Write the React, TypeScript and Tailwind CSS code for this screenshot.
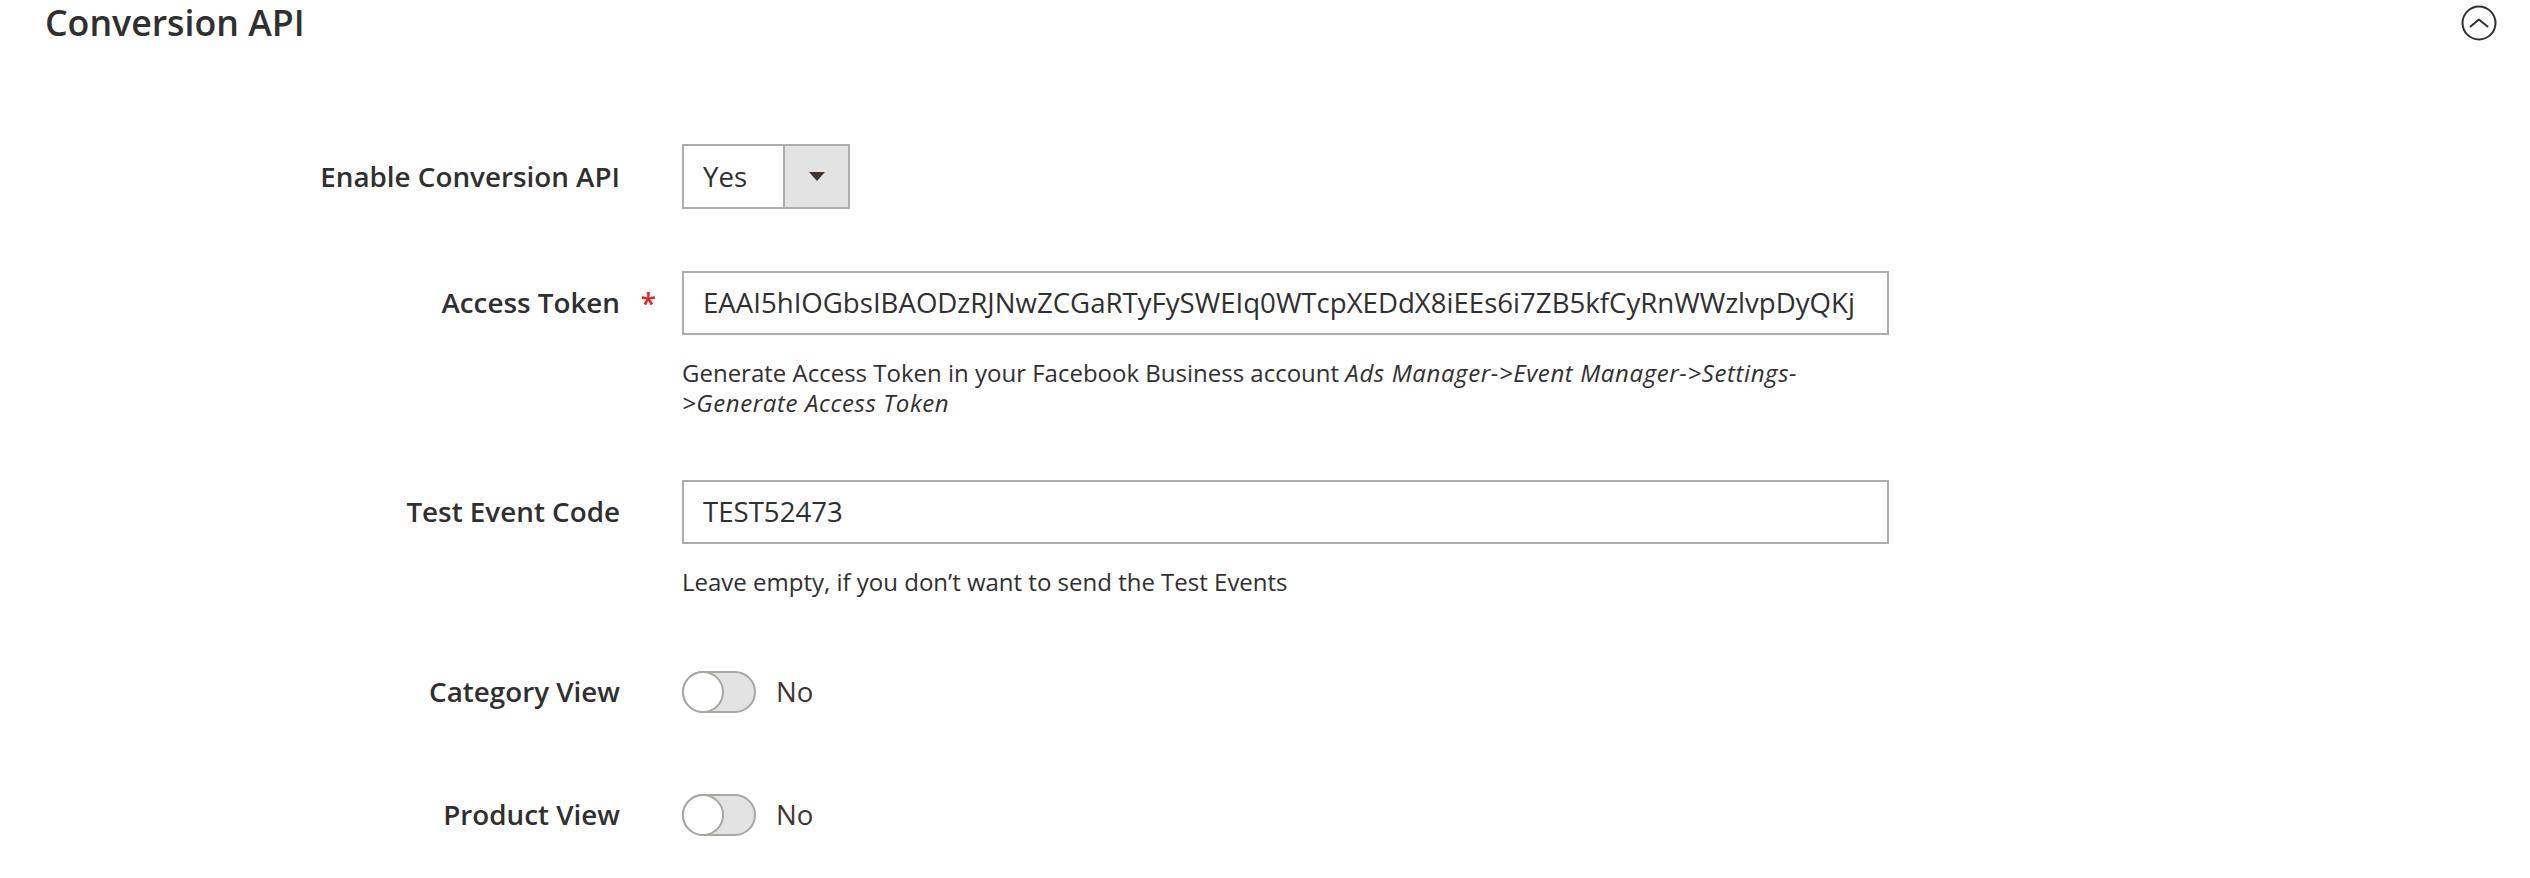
import React from 'react';

const Toggle = () => (
   <div className="flex items-center">
      <div className="relative w-[74px] h-[42px] rounded-full bg-[#e3e3e3] border-2 border-[#aaa6a0]">
         <div className="absolute -left-[2px] -top-[2px] w-[42px] h-[42px] rounded-full bg-white border-2 border-[#aaa6a0]" />
      </div>
      <span className="ml-[20px] text-[27.6px] text-[#41362f]">No</span>
   </div>
);

const Label = ({ text, required }: { text: string; required?: boolean }) => (
   <div className="flex items-center shrink-0">
      <div className="w-[620px] text-right text-[27.8px] font-semibold text-[#303030]">{text}</div>
      <div className="w-[62px] flex justify-center pr-[5px] text-[28px] font-semibold text-[#e22626] leading-none">
         {required ? '*' : ''}
      </div>
   </div>
);

const TextBox = ({ value }: { value: string }) => (
   <div className="w-[1207px] h-[64px] border-2 border-[#adadad] bg-white px-[19px] flex items-center">
      <div className="overflow-hidden whitespace-nowrap text-[27.6px] text-[#303030]">{value}</div>
   </div>
);

export default function App() {
   return (
      <div className="bg-white min-h-[878px] font-['Open_Sans',sans-serif] text-[#303030]">
         {/* Header */}
         <div className="flex items-center justify-between h-[45px] pl-[45px] pr-[33px]">
            <h1 className="text-[35.7px] font-semibold leading-[45px] text-[#303030]">Conversion API</h1>
            <svg width="36" height="36" viewBox="0 0 36 36" fill="none" stroke="#303030" strokeWidth="2">
               <circle cx="18" cy="18" r="16.5" />
               <polyline points="9.5,21.5 18,14.5 26.5,21.5" strokeLinecap="round" strokeLinejoin="round" />
            </svg>
         </div>

         <div className="mt-[99px]">
            {/* Enable Conversion API */}
            <div className="flex items-center h-[65px]">
               <Label text="Enable Conversion API" />
               <div className="flex h-[65px] w-[168px] border-2 border-[#adadad] bg-white">
                  <div className="flex-1 flex items-center pl-[19px] text-[27.6px] text-[#303030]">Yes</div>
                  <div className="w-[65px] flex items-center justify-center bg-[#e3e3e3] border-l-2 border-[#adadad]">
                     <svg width="16" height="10" viewBox="0 0 16 10">
                        <polygon points="0,0 16,0 8,9" fill="#41362f" />
                     </svg>
                  </div>
               </div>
            </div>

            {/* Access Token */}
            <div className="mt-[62px] flex items-center h-[64px]">
               <Label text="Access Token" required />
               <TextBox value="EAAI5hIOGbsIBAODzRJNwZCGaRTyFySWEIq0WTcpXEDdX8iEEs6i7ZB5kfCyRnWWzlvpDyQKj" />
            </div>
            <div className="ml-[682px] mt-[23px] w-[1207px] text-[24px] leading-[30px] text-[#303030]">
               Generate Access Token in your Facebook Business account{' '}
               <em className="tracking-[0.6px]">
                  Ads Manager-&gt;Event Manager-&gt;Settings-
                  <br />
                  &gt;Generate Access Token
               </em>
            </div>

            {/* Test Event Code */}
            <div className="mt-[62px] flex items-center h-[64px]">
               <Label text="Test Event Code" />
               <TextBox value="TEST52473" />
            </div>
            <div className="ml-[682px] mt-[23px] text-[24px] leading-[30px] text-[#303030]">
               Leave empty, if you don’t want to send the Test Events
            </div>

            {/* Category View */}
            <div className="mt-[74px] flex items-center h-[42px]">
               <Label text="Category View" />
               <Toggle />
            </div>

            {/* Product View */}
            <div className="mt-[81px] flex items-center h-[42px]">
               <Label text="Product View" />
               <Toggle />
            </div>
         </div>
      </div>
   );
}
